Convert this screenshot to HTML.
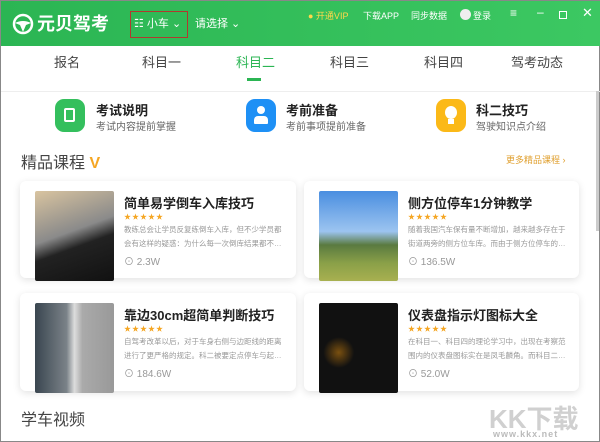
<!DOCTYPE html>
<html><head><meta charset="utf-8"><style>
*{margin:0;padding:0;box-sizing:border-box}
body{width:600px;height:442px;overflow:hidden;background:#fff;font-family:"Liberation Sans","Noto Sans CJK SC",sans-serif;position:relative;border:1px solid #888}
.hdr{position:absolute;left:0;top:0;width:600px;height:45px;background:linear-gradient(90deg,#2bb553,#3cc862)}
.a{position:absolute;white-space:nowrap}
.w{color:#fff}
.tab{position:absolute;top:51px;font-size:13px;color:#444}
.card{position:absolute;background:#fff;border-radius:6px;box-shadow:0 2px 8px rgba(0,0,0,.12)}
.thumb{position:absolute;left:15px;top:10px;width:79px;height:90px;border-radius:2px}
.ct{position:absolute;left:104px;top:12px;font-size:13px;font-weight:bold;color:#222}
.st{position:absolute;left:104px;top:31px;font-size:7px;color:#f5a623;letter-spacing:1px}
.cd{position:absolute;left:104px;top:42px;width:160px;font-size:7.5px;line-height:14px;color:#999;white-space:nowrap;overflow:hidden}
.cv{position:absolute;left:104px;top:72px;font-size:10px;color:#999}
.ic{position:absolute;width:30px;height:33px;border-radius:9px}
.ft{position:absolute;font-size:13px;font-weight:bold;color:#222}
.fs{position:absolute;font-size:10px;color:#666}
</style></head><body>
<div class="hdr"></div>
<svg class="a" style="left:11px;top:12px" width="22" height="22" viewBox="0 0 22 22"><circle cx="11" cy="11" r="9" fill="none" stroke="#fff" stroke-width="2.5"/><path d="M3 10 Q11 6 19 10 L14 12 L11 19 L8 12Z" fill="#fff"/></svg>
<div class="a w" style="left:36px;top:9px;font-size:18px;font-weight:bold">元贝驾考</div>
<div class="a" style="left:129px;top:10px;width:58px;height:27px;border:1px solid #b03a2e"></div>
<div class="a w" style="left:133px;top:14px;font-size:11px">☷ 小车 ⌄</div>
<div class="a w" style="left:194px;top:14px;font-size:11px">请选择 ⌄</div>
<div class="a" style="left:307px;top:8px;font-size:9px;color:#ffd84a">● 开通VIP</div>
<div class="a w" style="left:362px;top:8px;font-size:9px">下载APP</div>
<div class="a w" style="left:410px;top:8px;font-size:9px">同步数据</div>
<div class="a" style="left:459px;top:8px;width:11px;height:11px;border-radius:50%;background:#eee"></div>
<div class="a w" style="left:472px;top:8px;font-size:9px">登录</div>
<div class="a w" style="left:509px;top:5px;font-size:12px">≡</div>
<div class="a w" style="left:536px;top:4px;font-size:12px">–</div>
<div class="a" style="left:558px;top:10px;width:8px;height:8px;border:1.5px solid #fff"></div>
<div class="a w" style="left:581px;top:4px;font-size:13px">✕</div>
<div class="tab" style="left:53px">报名</div>
<div class="tab" style="left:141px">科目一</div>
<div class="tab" style="left:235px;color:#2bb553">科目二</div>
<div class="tab" style="left:329px">科目三</div>
<div class="tab" style="left:423px">科目四</div>
<div class="tab" style="left:510px">驾考动态</div>
<div class="a" style="left:246px;top:77px;width:14px;height:3px;background:#2bb553"></div>
<div class="a" style="left:0;top:90px;width:600px;height:1px;background:#eee"></div>
<div class="ic" style="left:54px;top:98px;background:#34bf5d"><div class="a" style="left:9px;top:9px;width:11px;height:14px;border:2px solid #fff;border-radius:2px"></div></div>
<div class="ft" style="left:95px;top:99px">考试说明</div><div class="fs" style="left:95px;top:117px">考试内容提前掌握</div>
<div class="ic" style="left:245px;top:98px;background:#1e90f5"><div class="a" style="left:11px;top:7px;width:8px;height:8px;border-radius:50%;background:#fff"></div><div class="a" style="left:8px;top:17px;width:14px;height:8px;border-radius:4px 4px 1px 1px;background:#fff"></div></div>
<div class="ft" style="left:285px;top:99px">考前准备</div><div class="fs" style="left:285px;top:117px">考前事项提前准备</div>
<div class="ic" style="left:435px;top:98px;background:#fbb918"><div class="a" style="left:9px;top:7px;width:12px;height:13px;border-radius:50%;background:#fff"></div><div class="a" style="left:12px;top:20px;width:6px;height:5px;background:#fff"></div></div>
<div class="ft" style="left:475px;top:99px">科二技巧</div><div class="fs" style="left:475px;top:117px">驾驶知识点介绍</div>
<div class="a" style="left:20px;top:148px;font-size:16px;color:#444">精品课程 <span style="color:#f5a623;font-weight:bold">V</span></div>
<div class="a" style="left:505px;top:152px;font-size:9px;color:#e0a030">更多精品课程 ›</div>
<div class="card" style="left:19px;top:180px;width:276px;height:97px">
<div class="thumb" style="background:linear-gradient(160deg,#d9c4a0,#8a8a8a 45%,#222 60%,#111)"></div>
<div class="ct">简单易学倒车入库技巧</div><div class="st">★★★★★</div>
<div class="cd">教练总会让学员反复练倒车入库，但不少学员都<br>会有这样的疑惑：为什么每一次倒库结果都不…</div><div class="cv">⊙ 2.3W</div></div>
<div class="card" style="left:303px;top:180px;width:275px;height:97px">
<div class="thumb" style="background:linear-gradient(180deg,#4a8ee0,#9cc4f0 45%,#5a7a40 60%,#8aa048 80%,#a8b050)"></div>
<div class="ct">侧方位停车1分钟教学</div><div class="st">★★★★★</div>
<div class="cd">随着我国汽车保有量不断增加，越来越多存在于<br>街道两旁的侧方位车库。而由于侧方位停车的…</div><div class="cv">⊙ 136.5W</div></div>
<div class="card" style="left:19px;top:292px;width:276px;height:98px">
<div class="thumb" style="background:linear-gradient(90deg,#3a4650,#7a8288 40%,#ddd 50%,#aaa 60%,#999)"></div>
<div class="ct">靠边30cm超简单判断技巧</div><div class="st">★★★★★</div>
<div class="cd">自驾考改革以后，对于车身右侧与边距线的距离<br>进行了更严格的规定。科二被要定点停车与起…</div><div class="cv">⊙ 184.6W</div></div>
<div class="card" style="left:303px;top:292px;width:275px;height:98px">
<div class="thumb" style="background:radial-gradient(circle at 25% 55%,#7a5010 0,#111 20%),radial-gradient(circle at 75% 55%,#7a5010 0,#111 20%),#111"></div>
<div class="ct">仪表盘指示灯图标大全</div><div class="st">★★★★★</div>
<div class="cd">在科目一、科目四的理论学习中，出现在考察范<br>围内的仪表盘图标实在是凤毛麟角。而科目二…</div><div class="cv">⊙ 52.0W</div></div>
<div class="a" style="left:20px;top:405px;font-size:16px;color:#444">学车视频</div>
<div class="a" style="left:488px;top:398px;font-size:26px;font-weight:bold;color:#d0d0d0">KK下载</div>
<div class="a" style="left:492px;top:428px;font-size:9px;font-weight:bold;color:#bbb;letter-spacing:1px">www.kkx.net</div>
<div class="a" style="left:595px;top:90px;width:3px;height:140px;background:#ccc"></div>
</body></html>
